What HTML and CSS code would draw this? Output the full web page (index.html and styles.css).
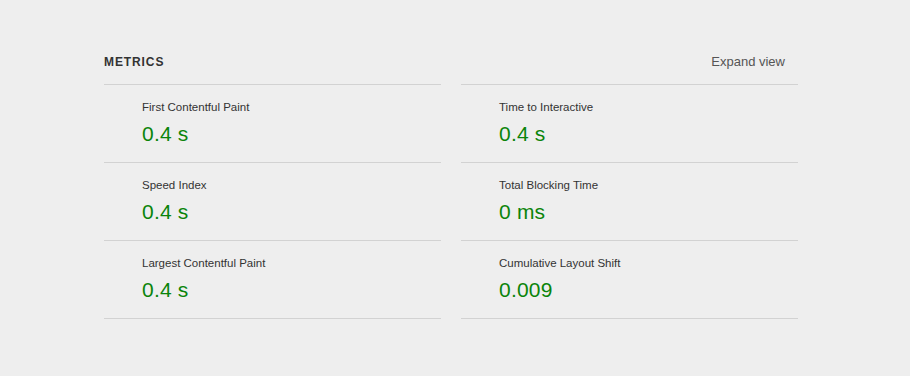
FILE: index.html
```html
<!DOCTYPE html>
<html lang="en">
<head>
  <meta charset="UTF-8" />
  <title>Metrics</title>
  <link rel="stylesheet" href="styles.css">
</head>
<body>

  <section class="metrics">
    <div class="metrics-header">
      <h2 class="metrics-title">Metrics</h2>
      <button type="button" class="expand-button">Expand view</button>
    </div>

    <div class="metrics-grid">
      <div class="metric-column">
        <div class="metric">
          <div class="metric-label">First Contentful Paint</div>
          <div class="metric-value">0.4 s</div>
        </div>
        <div class="metric">
          <div class="metric-label">Speed Index</div>
          <div class="metric-value">0.4 s</div>
        </div>
        <div class="metric">
          <div class="metric-label">Largest Contentful Paint</div>
          <div class="metric-value">0.4 s</div>
        </div>
      </div>

      <div class="metric-column">
        <div class="metric">
          <div class="metric-label">Time to Interactive</div>
          <div class="metric-value">0.4 s</div>
        </div>
        <div class="metric">
          <div class="metric-label">Total Blocking Time</div>
          <div class="metric-value">0 ms</div>
        </div>
        <div class="metric">
          <div class="metric-label">Cumulative Layout Shift</div>
          <div class="metric-value">0.009</div>
        </div>
      </div>
    </div>
  </section>

</body>
</html>
```

FILE: styles.css
```css
body {
  margin: 0;
  background: #eeeeee;
  font-family: "Liberation Sans", Arial, sans-serif;
  color: #333;
}

.metrics {
  width: 694px;
  margin-left: 104px;
  padding-top: 54px;
}

.metrics-header {
  display: flex;
  justify-content: space-between;
  align-items: baseline;
  margin-bottom: 14px;
}

.metrics-title {
  margin: 0;
  font-size: 12px;
  line-height: 16px;
  font-weight: bold;
  text-transform: uppercase;
  letter-spacing: 0.9px;
  color: #333;
}

.expand-button {
  background: none;
  border: none;
  padding: 0;
  margin-right: 13px;
  font-family: inherit;
  font-size: 13px;
  line-height: 16px;
  color: #555;
  cursor: pointer;
}

.metrics-grid {
  display: grid;
  grid-template-columns: 1fr 1fr;
  gap: 20px;
}

.metric {
  border-top: 1px solid #d2d2d2;
  padding: 14px 0 16px 38px;
}

.metric:last-child {
  border-bottom: 1px solid #d2d2d2;
}

.metric-label {
  font-size: 11.5px;
  line-height: 16px;
  margin-bottom: 7px;
}

.metric-value {
  font-size: 21px;
  line-height: 24px;
  letter-spacing: 0.2px;
  color: #0a840a;
}
```
